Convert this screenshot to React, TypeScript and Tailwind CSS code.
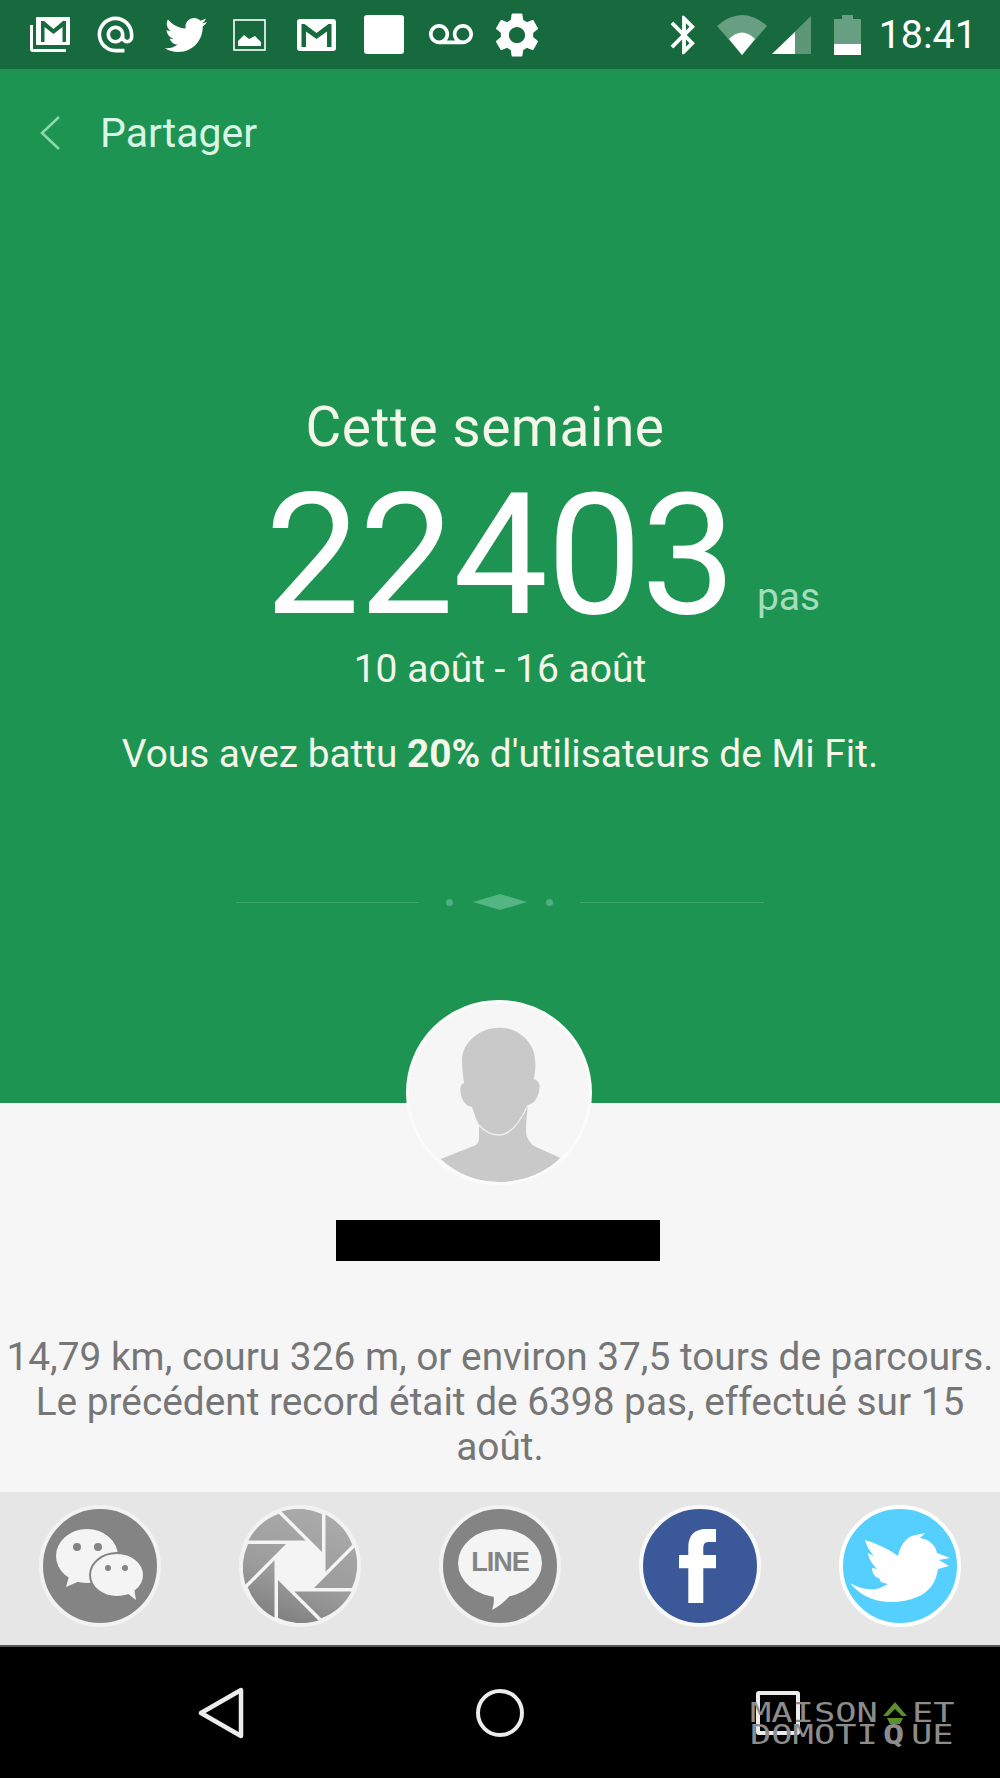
import { FaTwitter } from "react-icons/fa";
import { MdAlternateEmail, MdBluetooth, MdSettings, MdVoicemail } from "react-icons/md";

const font = "font-['Roboto',sans-serif]";

function GmailGlyph({ className }: { className?: string }) {
  return (
    <svg viewBox="0 0 39 32" className={className}>
      <rect x="0" y="0" width="39" height="32" rx="3" fill="#fff" />
      <path d="M4.5 28V5h3L19.5 14 31.5 5h3v23h-4.5V12.500L19.500 20 9 12.500V28z" fill="#176a3e" />
    </svg>
  );
}

function StatusLeft() {
  return (
    <div className="flex items-center">
      <svg viewBox="0 0 40 35" className="ml-[30px] h-[35px] w-[40px]">
        <path d="M0 8h3v24h33v3H3a3 3 0 0 1-3-3z" fill="#fff" />
        <rect x="6" y="0" width="34" height="28" rx="1" fill="#fff" />
        <path d="M11 25V4h3l9.500 8L33 4h3v21h-3.500V10l-9 7-9-7v15z" fill="#176a3e" />
      </svg>
      <MdAlternateEmail className="ml-[24px] h-[43px] w-[43px] text-white" />
      <FaTwitter className="ml-[28px] h-[42px] w-[42px] text-white" />
      <svg viewBox="0 0 33 32" className="ml-[26px] h-[32px] w-[33px]">
        <rect x="1" y="1" width="31" height="30" fill="none" stroke="#fff" strokeWidth="1.6" />
        <path d="M5 27v-5l6-6 5 4 6-3 6 6v4z" fill="#fff" />
      </svg>
      <GmailGlyph className="ml-[31px] h-[32px] w-[39px]" />
      <div className="ml-[28px] h-[39px] w-[40px] rounded-[3px] bg-white" />
      <MdVoicemail className="ml-[25px] h-[44px] w-[44px] text-white" />
      <MdSettings className="ml-[17px] h-[54px] w-[54px] text-white" />
    </div>
  );
}

function StatusRight() {
  return (
    <div className="ml-auto flex items-center">
      <MdBluetooth className="h-[46px] w-[46px] text-white" />
      <svg viewBox="0 0 50 40" className="ml-[10px] h-[40px] w-[50px]">
        <path d="M0 11Q25-11 50 11L25 40z" fill="#fff" fillOpacity="0.35" />
        <path d="M12 24Q25 11 38 24L25 40z" fill="#fff" />
      </svg>
      <svg viewBox="0 0 39 38" className="ml-[5px] h-[38px] w-[39px]">
        <path d="M39 0v38H0z" fill="#fff" fillOpacity="0.3" />
        <path d="M23 16v22H0z" fill="#fff" />
      </svg>
      <svg viewBox="0 0 27 40" className="ml-[23px] h-[40px] w-[27px]">
        <path d="M8 0h11v4h8v36H0V4h8z" fill="#fff" fillOpacity="0.35" />
        <rect x="0" y="29" width="27" height="11" fill="#fff" />
      </svg>
      <span className="ml-[18px] mr-[23px] text-[39.5px] leading-none text-white">18:41</span>
    </div>
  );
}

function Divider() {
  return (
    <div className="mt-[118px] flex items-center pl-[236px]">
      <div className="h-px w-[183px] bg-white/15" />
      <div className="ml-[27px] h-[7px] w-[7px] rounded-full bg-[#4cb07f]" />
      <svg viewBox="0 0 54 16" className="ml-[20px] h-[16px] w-[54px]">
        <path d="M0 8 27 0l27 8-27 8z" fill="#52b583" />
      </svg>
      <div className="ml-[19px] h-[7px] w-[7px] rounded-full bg-[#4cb07f]" />
      <div className="ml-[27px] h-px w-[184px] bg-white/15" />
    </div>
  );
}

function Avatar() {
  return (
    <div className="absolute left-[406px] top-[1000px] h-[185px] w-[186px] overflow-hidden rounded-full border-[3px] border-[#fbfbfb] bg-[#f6f6f6]">
      <svg viewBox="0 0 186 185" className="absolute left-[-3px] top-[-3px] h-[185px] w-[186px]">
        <path
          d="M93.6 27.7C72 27.700 56 44 56 60C56 68 57 76 58 83C55 84 54 87 54.400 91C55 99 59 106 66 107C68 113 70 119 73 125V138C73 142 71 145 67.600 146L34.700 159C50 173 70 182 93 182C118 182 140 173 154.400 158L128 146C123 142 120 137 120 131C120 122 121 113 122 105C128 104 133 97 133.600 87C134 83 131 80 128 79C129 72 130 66 129 60C129 44 114 27.700 93.600 27.700Z"
          fill="#c9c9c9"
        />
        <path d="M122 105C116 118 106 135 93 135C85 135 78 131 73 125" fill="none" stroke="#f0f0f0" strokeWidth="1.3" />
      </svg>
    </div>
  );
}

function ShareRing({ children, className }: { children: React.ReactNode; className: string }) {
  return (
    <div className={`flex h-[122px] w-[122px] items-center justify-center rounded-full border-[4px] ${className}`}>
      {children}
    </div>
  );
}

function WeChat() {
  return (
    <ShareRing className="border-[#f2f2f2] bg-[#848484]">
      <svg viewBox="0 0 114 114" className="h-[114px] w-[114px]">
        <ellipse cx="44" cy="47" rx="31" ry="27" fill="#f4f4f4" />
        <path d="M27 64l-4 14 16-7z" fill="#f4f4f4" />
        <ellipse cx="74" cy="66" rx="27" ry="22" fill="#f4f4f4" stroke="#848484" strokeWidth="2" />
        <path d="M84 84l9 7-2-12z" fill="#f4f4f4" />
        <circle cx="34" cy="38" r="4" fill="#848484" />
        <circle cx="55" cy="38" r="4" fill="#848484" />
        <circle cx="65" cy="59" r="3" fill="#848484" />
        <circle cx="82" cy="59" r="3" fill="#848484" />
      </svg>
    </ShareRing>
  );
}

function Aperture() {
  const blades = Array.from({ length: 8 }, (_, i) => {
    const a = (i * Math.PI) / 4;
    const rot = (x: number, y: number) =>
      `${(x * Math.cos(a) - y * Math.sin(a)).toFixed(1)} ${(x * Math.sin(a) + y * Math.cos(a)).toFixed(1)}`;
    return `M${rot(-18.5, -54.5)}A57 57 0 0 1 ${rot(22, -52)}L${rot(22, -14)}Z`;
  });
  return (
    <ShareRing className="border-[#f2f2f2] bg-[#f4f4f4]">
      <svg viewBox="-57 -57 114 114" className="h-[114px] w-[114px]">
        <defs>
          <linearGradient id="blade" gradientUnits="userSpaceOnUse" x1="20" y1="-57" x2="-20" y2="57">
            <stop offset="0" stopColor="#ababab" />
            <stop offset="0.6" stopColor="#9c9c9c" />
            <stop offset="1" stopColor="#7f7f7f" />
          </linearGradient>
        </defs>
        {blades.map((d) => (
          <path key={d} d={d} fill="url(#blade)" />
        ))}
      </svg>
    </ShareRing>
  );
}

function Line() {
  return (
    <ShareRing className="border-[#f2f2f2] bg-[#848484]">
      <div className="relative mb-[6px] flex h-[68px] w-[84px] items-center justify-center rounded-[50%] bg-[#f4f4f4]">
        <span className="text-[27px] font-bold leading-none tracking-[-1px] text-[#848484] font-['Liberation_Sans',sans-serif]">
          LINE
        </span>
        <svg viewBox="0 0 30 26" className="absolute left-[30px] top-[56px] h-[26px] w-[30px]">
          <path d="M0 0h30C24 10 14 20 4 25C7 16 7 8 0 0z" fill="#f4f4f4" />
        </svg>
      </div>
    </ShareRing>
  );
}

function Facebook() {
  return (
    <ShareRing className="border-[#f8f8f8] bg-[#3b5998]">
      <svg viewBox="-57 -57 114 114" className="h-[114px] w-[114px]">
        <path
          d="M3.300 37H-11.700V2.300H-21V-11H-11.700V-19C-11.700-31-5-37 6-37H16V-24H9C5-24 3.300-22 3.300-18V-11H16V2.300H3.300Z"
          fill="#fff"
        />
      </svg>
    </ShareRing>
  );
}

function TwitterBig() {
  return (
    <ShareRing className="border-white bg-[#55cffd]">
      <svg viewBox="-57 -57 114 114" className="h-[114px] w-[114px]">
        <path
          d="M-35-26C-22-22-10-16-2-10C0-20 6-30 16-31L25-33L20-28C29-27 36-20 37-13L50-8L39-6L49 0L38 3C36 16 30 26 17 31C6 36-8 37-20 35C-32 33-43 26-50 17C-42 22-30 25-20 22L-12 18C-18 17-21 15-20 13L-24 11C-28 7-28 3-28 2L-23 3C-29-3-32-9-32-13L-26-10C-31-16-34-21-35-26Z"
          fill="#fff"
        />
      </svg>
    </ShareRing>
  );
}

function Watermark() {
  const letters =
    "origin-left scale-x-[1.31] font-['DejaVu_Sans_Mono',monospace] text-[27px] leading-[20px] text-[#8c8c8c]";
  return (
    <div className="absolute left-[750px] top-[1703px] w-[207px]">
      <div className="relative h-[20px]">
        <span className={`absolute left-0 top-0 ${letters}`}>MAISON</span>
        <svg viewBox="0 0 24 22" className="absolute left-[133px] top-[-1px] h-[22px] w-[24px]">
          <path d="M12 0 24 14h-5L12 7 5 14H0z" fill="#5d8f2c" />
          <path d="M4 16h16l-3 6H7z" fill="#5d8f2c" />
        </svg>
        <span className={`absolute left-[162px] top-0 ${letters}`}>ET</span>
      </div>
      <div className="relative mt-[2px] h-[20px]">
        <span className={`absolute left-0 top-0 ${letters}`}>DOMOTI</span>
        <span className={`absolute left-[133px] top-0 ${letters} font-bold text-[#5d8f2c]`}>Q</span>
        <span className={`absolute left-[161px] top-0 ${letters}`}>UE</span>
      </div>
    </div>
  );
}

export default function App() {
  return (
    <main className={`relative flex h-[1778px] w-[1000px] flex-col overflow-hidden bg-black ${font}`}>
      {/* Status bar */}
      <div className="flex h-[69px] items-center bg-[#176a3e]">
        <StatusLeft />
        <StatusRight />
      </div>

      {/* Green block */}
      <section className="h-[1034px] bg-[#1d9452]">
        <header className="flex h-[128px] items-center pl-[40px]">
          <svg viewBox="0 0 20 34" className="h-[34px] w-[20px]">
            <path d="M19 1 2 17l17 16" fill="none" stroke="#8ed8ae" strokeWidth="2.500" />
          </svg>
          <span className="ml-[40px] text-[41px] leading-none text-[#d8f6e6]">Partager</span>
        </header>

        <h1 className="mt-[197px] pr-[30px] text-center text-[55px] font-normal leading-[66px] tracking-[0.5px] text-[#f3f6e8]">
          Cette semaine
        </h1>
        <div className="mt-[30px] flex items-baseline pl-[265px]">
          <span className="text-[169px] leading-[130px] tracking-[-1px] text-white">22403</span>
          <span className="ml-[22px] -translate-y-[3px] text-[39px] leading-none text-[#a5dcbc]">pas</span>
        </div>
        <p className="mt-[27px] text-center text-[39px] leading-[44px] text-[#f3f6e8]">10 août - 16 août</p>
        <p className="mt-[41px] text-center text-[38.8px] leading-[44px] text-[#f3f6e8]">
          Vous avez battu <b className="font-bold">20%</b> d'utilisateurs de Mi Fit.
        </p>
        <Divider />
      </section>

      {/* Stats */}
      <section className="flex h-[389px] flex-col items-center bg-[#f6f6f6]">
        <div className="mr-[4px] mt-[117px] h-[41px] w-[324px] bg-black" />
        <p className="mt-[73px] whitespace-nowrap text-center text-[38.8px] leading-[45px] text-[#767676]">
          14,79 km, couru 326 m, or environ 37,5 tours de parcours.
          <br />
          Le précédent record était de 6398 pas, effectué sur 15
          <br />
          août.
        </p>
      </section>

      {/* Share row */}
      <div className="flex h-[153px] items-center justify-between bg-[#e6e6e6] px-[39px] pb-[6px]">
        <WeChat />
        <Aperture />
        <Line />
        <Facebook />
        <TwitterBig />
      </div>

      {/* Nav bar */}
      <nav className="flex flex-1 items-center border-t-2 border-[#555] pl-[198px]">
        <svg viewBox="0 0 46 52" className="h-[52px] w-[46px]">
          <path d="M43 3v46L3 26z" fill="none" stroke="#ececec" strokeWidth="4.500" strokeLinejoin="round" />
        </svg>
        <div className="ml-[232px] h-[48px] w-[48px] rounded-full border-[4.500px] border-[#ececec]" />
        <div className="ml-[232px] h-[44px] w-[44px] rounded-[3px] border-[4.500px] border-[#ececec]" />
      </nav>

      <Avatar />
      <Watermark />
    </main>
  );
}
